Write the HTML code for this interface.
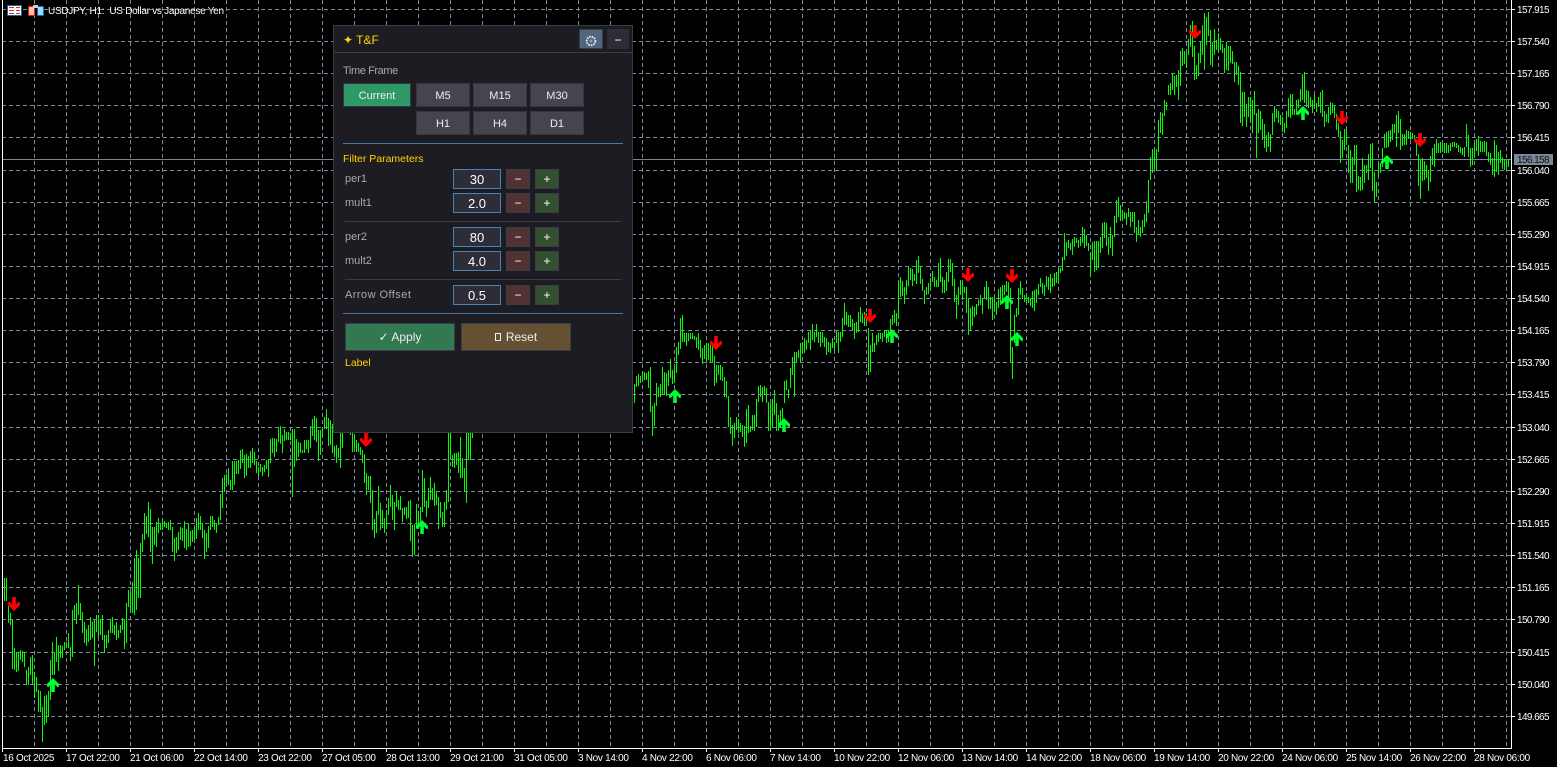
<!DOCTYPE html>
<html lang="en">
<head>
<meta charset="utf-8">
<title>USDJPY, H1</title>
<style>
html,body{margin:0;padding:0;background:#000;width:1557px;height:767px;overflow:hidden}
body{position:relative;font-family:"Liberation Sans",sans-serif}
svg.c{position:absolute;left:0;top:0}
.p,.d,.t{position:absolute;color:#fff;font-size:10px;line-height:12px;white-space:nowrap}
.p{left:1517px;letter-spacing:-.6px;margin-top:2px}
.d{top:753px;letter-spacing:-.3px}
#pn{position:absolute;left:333px;top:25px;width:298px;height:406px;background:#1c1c22;border:1px solid #3c3c46}
#pn div{position:absolute;box-sizing:border-box;white-space:nowrap}
.b{background:#454550;border:1px solid #37373f;color:#eee;font-size:11px;text-align:center;height:24px;line-height:25px;width:54px}
.l{color:#a8a8b2;font-size:11px;line-height:14px;left:11px;margin-top:1px}
.i{left:119px;width:48px;height:20px;background:#2d2d37;border:1px solid #4682b4;color:#fff;font-size:13px;line-height:19px;text-align:center}
.m,.q{width:24px;height:20px;border:1px solid #3c3c46;color:#fff;text-align:center;font-size:12px;line-height:19px}
.m{left:172px;background:#503232}
.q{left:201px;background:#32502f}
.s{height:1px;background:#3c3c46;left:11px;width:276px}
.h{height:1px;background:#4678a0;left:9px;width:280px}
</style>
</head>
<body>
<svg class="c" width="1557" height="767" viewBox="0 0 1557 767">
<path fill="none" stroke="#778899" stroke-width="1" stroke-dasharray="4 3" shape-rendering="crispEdges" d="M2 9.5H1511M2 41.5H1511M2 73.5H1511M2 105.5H1511M2 137.5H1511M2 170.5H1511M2 202.5H1511M2 234.5H1511M2 266.5H1511M2 298.5H1511M2 330.5H1511M2 362.5H1511M2 394.5H1511M2 427.5H1511M2 459.5H1511M2 491.5H1511M2 523.5H1511M2 555.5H1511M2 587.5H1511M2 619.5H1511M2 652.5H1511M2 684.5H1511M2 716.5H1511M34.5 0V748M66.5 0V748M98.5 0V748M130.5 0V748M162.5 0V748M194.5 0V748M226.5 0V748M258.5 0V748M290.5 0V748M322.5 0V748M354.5 0V748M386.5 0V748M418.5 0V748M450.5 0V748M482.5 0V748M514.5 0V748M546.5 0V748M578.5 0V748M610.5 0V748M642.5 0V748M674.5 0V748M706.5 0V748M738.5 0V748M770.5 0V748M802.5 0V748M834.5 0V748M866.5 0V748M898.5 0V748M930.5 0V748M962.5 0V748M994.5 0V748M1026.5 0V748M1058.5 0V748M1090.5 0V748M1122.5 0V748M1154.5 0V748M1186.5 0V748M1218.5 0V748M1250.5 0V748M1282.5 0V748M1314.5 0V748M1346.5 0V748M1378.5 0V748M1410.5 0V748M1442.5 0V748M1474.5 0V748M1506.5 0V748"/>
<path fill="none" stroke="#778899" stroke-width="1" shape-rendering="crispEdges" d="M2 159.5H1511"/>
<path transform="translate(.5 0)" fill="none" stroke="#00ff00" stroke-width="1" shape-rendering="crispEdges" d="M4 578V601M6 578V601M8 606V623M10 613V625M12 620V669M14 648V670M16 652V672M18 652V671M20 650V660M22 651V662M24 652V667M26 670V685M28 667V685M30 657V675M32 655V685M34 672V698M36 677V692M38 690V712M40 691V712M42 707V742M44 696V725M46 695V723M48 691V717M50 660V700M52 642V675M54 652V675M56 637V662M58 645V671M60 645V658M62 646V658M64 642V650M66 642V648M68 633V648M70 647V661M72 610V657M74 605V620M76 603V624M78 585V615M80 603V620M82 612V633M84 622V643M86 629V646M88 625V642M90 617V640M92 622V638M94 620V666M96 615V632M98 615V637M100 620V635M102 615V640M104 635V653M106 635V648M108 630V643M110 619V633M112 617V633M114 625V635M116 622V640M118 630V638M120 625V633M122 618V630M124 620V649M126 603V643M128 590V607M130 592V612M132 582V613M134 558V615M136 550V610M138 558V598M140 543V598M142 534V552M144 513V540M146 516V534M148 502V537M150 509V552M152 527V564M154 527V545M156 522V547M158 518V533M160 523V530M162 519V530M164 521V527M166 523V528M168 522V530M170 520V530M172 527V552M174 538V561M176 537V553M178 532V550M180 527V540M182 528V541M184 521V548M186 529V550M188 523V547M190 531V546M192 530V542M194 526V539M196 518V539M198 513V530M200 516V530M202 523V538M204 530V559M206 533V552M208 526V548M210 516V530M212 516V527M214 520V530M216 523V533M218 517V525M220 494V520M222 478V508M224 475V492M226 474V483M228 468V485M230 480V490M232 461V490M234 461V485M236 461V474M238 460V474M240 450V469M242 449V463M244 455V478M246 454V476M248 456V468M250 451V468M252 448V463M254 452V465M256 461V473M258 467V476M260 464V472M262 467V476M264 465V472M266 460V469M268 459V477M270 439V463M272 438V453M274 438V457M276 439V452M278 427V442M280 426V444M282 435V453M284 429V441M286 432V440M288 432V440M290 433V440M292 429V497M294 429V467M296 439V461M298 442V457M300 443V453M302 450V453M304 440V453M306 440V449M308 440V453M310 426V448M312 419V436M314 416V440M316 418V442M318 430V461M320 430V455M322 428V436M324 417V429M326 409V429M328 418V446M330 420V445M332 424V453M334 446V457M336 445V463M338 448V458M340 433V468M342 433V448M350 433V435M352 433V452M354 435V449M356 440V452M358 443V452M360 447V455M362 450V463M364 454V483M366 473V495M368 476V490M370 476V503M372 490V530M374 519V538M376 511V533M378 486V515M380 503V530M382 510V528M384 518V533M386 510V529M388 498V515M390 485V507M392 495V520M394 502V530M396 492V507M398 500V510M400 496V510M402 508V522M404 507V515M406 507V519M408 501V518M410 500V541M412 525V557M414 524V555M416 504V527M418 513V528M420 507V522M422 470V512M424 478V507M426 501V517M428 488V508M430 477V500M432 488V500M434 483V506M436 492V505M438 497V529M440 502V518M442 512V527M444 502V527M446 490V510M448 433V502M450 433V458M452 455V467M454 453V468M456 453V465M458 452V473M460 437V478M462 458V478M464 468V492M466 433V503M468 433V460M470 433V460M472 433V438M634 384V403M636 376V387M638 374V386M640 376V383M642 371V380M644 372V380M646 373V380M648 371V388M650 367V412M652 406V436M654 403V426M656 383V406M658 387V397M660 384V397M662 367V395M664 372V395M666 373V396M668 370V386M670 359V378M672 370V384M674 366V383M676 347V373M678 342V355M680 318V349M682 315V342M684 333V342M686 333V346M688 333V341M690 333V339M692 333V339M694 336V340M696 337V348M698 333V350M700 340V358M702 348V364M704 345V359M706 343V363M708 343V360M710 345V362M712 343V363M714 356V386M716 365V383M718 365V375M720 365V380M722 367V381M724 377V397M726 381V398M728 396V427M730 417V434M732 425V446M734 423V438M736 417V430M738 419V433M740 423V432M742 425V437M744 426V447M746 409V443M748 405V433M750 426V432M752 415V430M754 415V431M756 399V427M758 386V402M760 385V397M762 387V402M764 386V395M766 388V403M768 402V431M770 403V430M772 399V428M774 390V415M776 403V431M778 415V431M780 410V428M782 408V425M784 381V403M786 380V390M788 389V398M790 368V388M792 357V375M794 352V397M796 352V363M798 350V358M800 343V363M802 342V353M804 338V353M806 340V350M808 332V343M810 330V350M812 324V340M814 332V342M816 324V337M818 332V343M820 332V347M822 332V343M824 337V347M826 338V355M828 342V352M830 343V353M832 338V348M834 342V350M836 331V343M838 332V353M840 332V342M842 318V337M844 303V325M846 312V325M848 315V327M850 315V327M852 319V330M854 323V339M856 322V333M858 312V332M860 307V322M862 313V323M864 312V326M866 313V323M868 328V375M870 345V372M872 333V352M874 343V352M876 335V345M878 333V342M880 333V339M882 333V342M884 330V337M886 330V343M888 330V342M890 319V333M892 315V325M894 310V323M896 313V326M898 281V318M900 277V297M902 281V296M904 287V304M906 280V295M908 267V286M910 268V280M912 269V286M914 274V281M916 260V284M918 256V273M920 266V284M922 279V291M924 290V304M926 287V295M928 283V294M930 278V287M932 271V282M934 277V287M936 280V287M938 263V287M940 258V282M942 277V293M944 280V293M946 272V291M948 259V282M950 259V272M952 263V286M954 279V302M956 295V319M958 287V305M960 280V295M962 282V300M964 287V293M966 287V313M968 298V335M970 308V331M972 306V326M974 307V317M976 304V315M978 300V306M980 295V305M982 298V314M984 287V298M986 281V300M988 287V309M990 297V309M992 297V320M994 296V311M996 302V315M998 289V308M1000 287V305M1002 285V300M1004 285V295M1006 281V292M1008 282V297M1010 288V363M1012 347V379M1014 315V343M1016 308V317M1018 288V315M1020 281V295M1022 288V299M1024 295V302M1026 293V303M1028 297V303M1030 298V306M1032 291V308M1034 290V311M1036 289V303M1038 284V295M1040 278V287M1042 283V294M1044 285V296M1046 276V287M1048 277V290M1050 274V293M1052 278V287M1054 273V286M1056 272V283M1058 268V283M1060 268V273M1062 257V271M1064 233V260M1066 242V256M1068 240V248M1070 243V250M1072 239V255M1074 237V247M1076 238V243M1078 240V248M1080 237V246M1082 227V243M1084 229V248M1086 235V246M1088 243V251M1090 252V277M1092 242V260M1094 241V272M1096 241V270M1098 241V268M1100 237V253M1102 223V248M1104 222V238M1106 223V246M1108 237V255M1110 227V248M1112 235V256M1114 216V237M1116 200V223M1118 197V217M1120 205V221M1122 210V219M1124 212V219M1126 213V225M1128 208V217M1130 212V227M1132 212V222M1134 212V233M1136 227V242M1138 220V235M1140 227V237M1142 220V233M1144 214V227M1146 201V222M1148 180V213M1150 157V180M1152 149V173M1154 149V168M1156 149V171M1158 120V152M1160 112V133M1162 113V135M1164 100V116M1166 102V110M1168 85V95M1170 83V95M1172 73V90M1174 76V95M1176 75V87M1178 70V100M1180 51V86M1182 48V66M1184 51V64M1186 52V68M1188 39V55M1190 25V47M1192 21V57M1194 46V80M1196 65V79M1198 53V76M1200 42V63M1202 25V55M1204 13V70M1206 17V45M1208 12V36M1210 30V65M1212 42V67M1214 29V55M1216 40V50M1218 33V52M1220 38V50M1222 44V53M1224 48V73M1226 42V70M1228 46V71M1230 46V63M1232 51V64M1234 62V82M1236 62V75M1238 66V85M1240 72V123M1242 92V126M1244 92V117M1246 104V127M1248 97V117M1250 97V123M1252 100V133M1254 91V115M1256 113V158M1258 109V133M1260 111V130M1262 119V140M1264 124V148M1266 135V152M1268 132V147M1270 134V152M1272 113V135M1274 106V122M1276 109V118M1278 111V123M1280 115V125M1282 117V132M1284 123V133M1286 111V128M1288 98V117M1290 94V118M1292 94V115M1294 109V115M1296 100V115M1298 99V108M1300 89V102M1302 74V100M1304 72V103M1306 90V107M1308 91V108M1310 97V107M1312 100V113M1314 95V107M1316 103V112M1318 97V107M1320 92V113M1322 90V117M1324 111V127M1326 114V122M1328 107V123M1330 102V115M1332 103V113M1334 106V118M1336 114V130M1338 123V137M1340 131V163M1342 140V158M1344 129V150M1346 130V145M1348 145V173M1350 150V183M1352 157V183M1354 145V165M1356 145V192M1358 176V190M1360 177V191M1362 158V190M1364 165V183M1366 165V173M1368 154V180M1370 144V168M1372 143V191M1374 172V203M1376 182V197M1378 163V177M1380 163V173M1382 148V167M1384 134V148M1386 132V148M1388 131V147M1390 130V142M1392 124V140M1394 124V133M1396 115V147M1398 111V133M1400 119V150M1402 134V146M1404 134V145M1406 130V145M1408 131V139M1410 132V140M1412 133V139M1414 135V140M1416 142V156M1418 154V186M1420 159V199M1422 158V181M1424 161V180M1426 165V178M1428 170V191M1430 156V182M1432 148V165M1434 144V167M1436 139V153M1438 143V153M1440 142V153M1442 144V152M1444 143V153M1446 143V153M1448 145V153M1450 143V151M1452 142V147M1454 142V147M1456 143V148M1458 145V152M1460 147V153M1462 148V155M1464 147V157M1466 124V147M1468 135V157M1470 148V167M1472 148V165M1474 143V157M1476 139V151M1478 136V156M1480 141V152M1482 142V152M1484 141V152M1486 142V156M1488 152V162M1490 153V165M1492 158V175M1494 140V177M1496 145V172M1498 152V175M1500 150V163M1502 157V169M1504 159V170M1506 160V168M1508 159V167"/>
<defs>
<path id="dn" d="M12.200 597H15.800V604.600L19 601.500L20 603V605L14 611L8 605V603L9 601.500L12.200 604.600Z"/>
<path id="up" d="M51.200 692H54.800V684.400L58 687.500L59 686V684L53 678L47 684V686L48 687.500L51.200 684.400Z"/>
</defs>
<g fill="#ff0000">
<use href="#dn"/>
<use href="#dn" transform="translate(352 -164)"/>
<use href="#dn" transform="translate(702 -261)"/>
<use href="#dn" transform="translate(856 -288)"/>
<use href="#dn" transform="translate(954 -329)"/>
<use href="#dn" transform="translate(998 -328)"/>
<use href="#dn" transform="translate(1181 -572)"/>
<use href="#dn" transform="translate(1328 -486)"/>
<use href="#dn" transform="translate(1406 -464)"/>
</g>
<g fill="#00ff33">
<use href="#up"/>
<use href="#up" transform="translate(369 -158)"/>
<use href="#up" transform="translate(622 -289)"/>
<use href="#up" transform="translate(731 -260)"/>
<use href="#up" transform="translate(839 -349)"/>
<use href="#up" transform="translate(954 -383)"/>
<use href="#up" transform="translate(964 -346)"/>
<use href="#up" transform="translate(1250 -572)"/>
<use href="#up" transform="translate(1334 -523)"/>
</g>
<path fill="none" stroke="#fff" stroke-width="1" shape-rendering="crispEdges" d="M2.500 0V752M2 748.500H1511.500M1511.500 0V749M66.500 748V752M130.500 748V752M194.500 748V752M258.500 748V752M322.500 748V752M386.500 748V752M450.500 748V752M514.500 748V752M578.500 748V752M642.500 748V752M706.500 748V752M770.500 748V752M834.500 748V752M898.500 748V752M962.500 748V752M1026.500 748V752M1090.500 748V752M1154.500 748V752M1218.500 748V752M1282.500 748V752M1346.500 748V752M1410.500 748V752M1474.500 748V752M1511 9.500H1515M1511 41.500H1515M1511 73.500H1515M1511 105.500H1515M1511 137.500H1515M1511 170.500H1515M1511 202.500H1515M1511 234.500H1515M1511 266.500H1515M1511 298.500H1515M1511 330.500H1515M1511 362.500H1515M1511 394.500H1515M1511 427.500H1515M1511 459.500H1515M1511 491.500H1515M1511 523.500H1515M1511 555.500H1515M1511 587.500H1515M1511 619.500H1515M1511 652.500H1515M1511 684.500H1515M1511 716.500H1515"/>
<g shape-rendering="crispEdges">
<rect x="7.500" y="5.500" width="14" height="10" fill="#fff" stroke="#1e64a0"/>
<path stroke="#e03020" fill="none" d="M9 7.500H14M16 7.500H20M9 10.500H14M16 10.500H20M9 13.500H14M16 13.500H20"/>
<rect x="28.500" y="6.500" width="6" height="9" fill="#ffc0b0" stroke="#d02010"/>
<rect x="37.500" y="6.500" width="6" height="9" fill="#a0d8ff" stroke="#1e64a0"/>
<rect x="33" y="5" width="5" height="3" fill="#d0d0d0"/>
</g>
<rect x="1514" y="154" width="39" height="11" fill="#778899"/>
</svg>
<div class="t" style="left:48px;top:6px;letter-spacing:-.27px">USDJPY, H1:&nbsp; US Dollar vs Japanese Yen</div>
<div class="p" style="left:1517px;top:153px;color:#111">156.158</div>
<div class="p" style="top:3px">157.915</div>
<div class="p" style="top:35px">157.540</div>
<div class="p" style="top:67px">157.165</div>
<div class="p" style="top:99px">156.790</div>
<div class="p" style="top:131px">156.415</div>
<div class="p" style="top:164px">156.040</div>
<div class="p" style="top:196px">155.665</div>
<div class="p" style="top:228px">155.290</div>
<div class="p" style="top:260px">154.915</div>
<div class="p" style="top:292px">154.540</div>
<div class="p" style="top:324px">154.165</div>
<div class="p" style="top:356px">153.790</div>
<div class="p" style="top:388px">153.415</div>
<div class="p" style="top:421px">153.040</div>
<div class="p" style="top:453px">152.665</div>
<div class="p" style="top:485px">152.290</div>
<div class="p" style="top:517px">151.915</div>
<div class="p" style="top:549px">151.540</div>
<div class="p" style="top:581px">151.165</div>
<div class="p" style="top:613px">150.790</div>
<div class="p" style="top:646px">150.415</div>
<div class="p" style="top:678px">150.040</div>
<div class="p" style="top:710px">149.665</div>
<div class="d" style="left:3px">16 Oct 2025</div>
<div class="d" style="left:66px">17 Oct 22:00</div>
<div class="d" style="left:130px">21 Oct 06:00</div>
<div class="d" style="left:194px">22 Oct 14:00</div>
<div class="d" style="left:258px">23 Oct 22:00</div>
<div class="d" style="left:322px">27 Oct 05:00</div>
<div class="d" style="left:386px">28 Oct 13:00</div>
<div class="d" style="left:450px">29 Oct 21:00</div>
<div class="d" style="left:514px">31 Oct 05:00</div>
<div class="d" style="left:578px">3 Nov 14:00</div>
<div class="d" style="left:642px">4 Nov 22:00</div>
<div class="d" style="left:706px">6 Nov 06:00</div>
<div class="d" style="left:770px">7 Nov 14:00</div>
<div class="d" style="left:834px">10 Nov 22:00</div>
<div class="d" style="left:898px">12 Nov 06:00</div>
<div class="d" style="left:962px">13 Nov 14:00</div>
<div class="d" style="left:1026px">14 Nov 22:00</div>
<div class="d" style="left:1090px">18 Nov 06:00</div>
<div class="d" style="left:1154px">19 Nov 14:00</div>
<div class="d" style="left:1218px">20 Nov 22:00</div>
<div class="d" style="left:1282px">24 Nov 06:00</div>
<div class="d" style="left:1346px">25 Nov 14:00</div>
<div class="d" style="left:1410px">26 Nov 22:00</div>
<div class="d" style="left:1474px">28 Nov 06:00</div>
<div id="pn">
<div style="left:9px;top:6px;color:#ffd700;font-size:12px;line-height:16px">✦ T&amp;F</div>
<div style="left:245px;top:3px;width:24px;height:20px;background:#50667e;border:1px solid #3c3c46">
<svg width="12" height="12" viewBox="0 0 12 12" style="position:absolute;left:5px;top:5px"><circle cx="6" cy="6" r="4.300" fill="none" stroke="#e8e8e8" stroke-width="2" stroke-dasharray="1.600 1"/><circle cx="6" cy="6" r="1.500" fill="#8fa0b0"/></svg>
</div>
<div style="left:273px;top:3px;width:22px;height:20px;background:#2d2d37;color:#fff;font-size:12px;line-height:22px;text-align:center">−</div>
<div style="left:0;top:26px;width:298px;height:1px;background:#3c3c46"></div>
<div class="l" style="left:9px;top:37px;letter-spacing:-.4px">Time Frame</div>
<div class="b" style="left:9px;top:57px;width:68px;background:#2e9966;border-color:#37373f">Current</div>
<div class="b" style="left:82px;top:57px">M5</div>
<div class="b" style="left:139px;top:57px">M15</div>
<div class="b" style="left:196px;top:57px">M30</div>
<div class="b" style="left:82px;top:85px">H1</div>
<div class="b" style="left:139px;top:85px">H4</div>
<div class="b" style="left:196px;top:85px">D1</div>
<div class="h" style="top:117px"></div>
<div style="left:9px;top:126px;color:#ffd700;font-size:10.500px;line-height:14px">Filter Parameters</div>
<div class="l" style="top:145px">per1</div>
<div class="i" style="top:143px">30</div><div class="m" style="top:143px">−</div><div class="q" style="top:143px">+</div>
<div class="l" style="top:169px">mult1</div>
<div class="i" style="top:167px">2.0</div><div class="m" style="top:167px">−</div><div class="q" style="top:167px">+</div>
<div class="s" style="top:195px"></div>
<div class="l" style="top:203px">per2</div>
<div class="i" style="top:201px">80</div><div class="m" style="top:201px">−</div><div class="q" style="top:201px">+</div>
<div class="l" style="top:227px">mult2</div>
<div class="i" style="top:225px">4.0</div><div class="m" style="top:225px">−</div><div class="q" style="top:225px">+</div>
<div class="s" style="top:253px"></div>
<div class="l" style="top:261px;letter-spacing:.45px">Arrow Offset</div>
<div class="i" style="top:259px">0.5</div><div class="m" style="top:259px">−</div><div class="q" style="top:259px">+</div>
<div class="h" style="top:287px"></div>
<div style="left:11px;top:297px;width:110px;height:28px;background:#327850;border:1px solid #3c3c46;color:#eee;font-size:12px;line-height:26px;text-align:center">✓ Apply</div>
<div style="left:127px;top:297px;width:110px;height:28px;background:#645032;border:1px solid #3c3c46;color:#eee;font-size:12px;line-height:26px;text-align:center"><span style="display:inline-block;box-sizing:border-box;width:6px;height:8px;border:1px solid #eee;margin-right:5px"></span>Reset</div>
<div style="left:11px;top:330px;color:#ffd700;font-size:10.500px;line-height:14px">Label</div>
</div>
</body>
</html>
